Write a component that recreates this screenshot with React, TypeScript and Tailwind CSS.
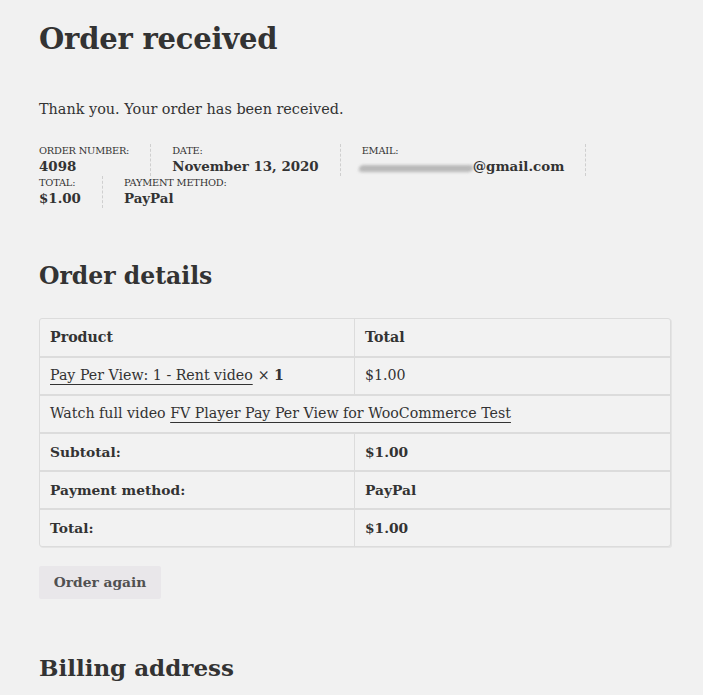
import React from 'react';

const serif = { fontFamily: '"DejaVu Serif", "Liberation Serif", serif' };

const overview = [
  { label: 'Order number:', value: '4098' },
  { label: 'Date:', value: 'November 13, 2020' },
  { label: 'Email:', value: 'email' },
  { label: 'Total:', value: '$1.00' },
  { label: 'Payment method:', value: 'PayPal' },
];

const totals = [
  { label: 'Subtotal:', value: '$1.00' },
  { label: 'Payment method:', value: 'PayPal' },
  { label: 'Total:', value: '$1.00' },
];

export default function App() {
  return (
    <div className="min-h-[695px] bg-[#f1f1f1] text-[#333] px-[39px] pt-[19px] pb-10" style={serif}>
      <h1 className="text-[29px] font-bold leading-[40px] tracking-[-0.2px]">Order received</h1>

      <p className="mt-[38px] text-[14.4px] leading-[24px]">Thank you. Your order has been received.</p>

      <ul className="mt-[23px] flex flex-wrap w-[632px]">
        {overview.map((item) => (
          <li
            key={item.label}
            className="pr-[21px] mr-[21px] border-r border-dashed border-[#cfcfcf] last:border-r-0 h-[32px] flex flex-col"
          >
            <span className="uppercase text-[9.8px] leading-[13px] tracking-[-0.2px]">{item.label}</span>
            {item.value === 'email' ? (
              <strong className="text-[13.4px] leading-[19px] flex items-center">
                <span className="inline-block w-[114px] h-[7px] -ml-[3px] bg-[#b9b9b9] blur-[1.5px] rounded-full -skew-x-12 mt-[4px]" />
                @gmail.com
              </strong>
            ) : (
              <strong className="text-[13.4px] leading-[19px]">{item.value}</strong>
            )}
          </li>
        ))}
      </ul>

      <h2 className="mt-[51px] text-[23.5px] font-bold leading-[34px]">Order details</h2>

      <div className="mt-[25px] w-[632px] border border-[#dcdcdc] rounded-[3px] shadow-[1px_1px_0_#e4e4e4] bg-[#f2f2f2] text-[14.2px]">
        <div className="flex h-[37px] items-center">
          <div className="w-[315px] h-full flex items-center pl-[10px] border-r border-[#dcdcdc] font-bold">Product</div>
          <div className="flex-1 pl-[10px] font-bold">Total</div>
        </div>
        <div className="flex h-[38px] border-t-2 border-[#dcdcdc]">
          <div className="w-[315px] flex items-center pl-[10px] border-r border-[#dcdcdc]">
            <a className="underline decoration-1 underline-offset-[4px]">Pay Per View: 1 - Rent video</a>
            <span className="ml-[5px]">× <strong>1</strong></span>
          </div>
          <div className="flex-1 flex items-center pl-[10px]">$1.00</div>
        </div>
        <div className="flex h-[38px] items-center border-t-2 border-[#dcdcdc] pl-[10px]">
          Watch full video&nbsp;
          <a className="underline decoration-1 underline-offset-[4px]">FV Player Pay Per View for WooCommerce Test</a>
        </div>
        {totals.map((row) => (
          <div key={row.label} className="flex h-[38px] border-t-2 border-[#dcdcdc] font-bold text-[13.8px]">
            <div className="w-[315px] flex items-center pl-[10px] border-r border-[#dcdcdc]">{row.label}</div>
            <div className="flex-1 flex items-center pl-[10px]">{row.value}</div>
          </div>
        ))}
      </div>

      <button className="mt-[19px] w-[122px] h-[33px] bg-[#e9e7ea] rounded-[2px] text-[13.8px] font-bold text-[#515151]">
        Order again
      </button>

      <h2 className="mt-[52px] text-[23px] font-bold leading-[34px]">Billing address</h2>
    </div>
  );
}
